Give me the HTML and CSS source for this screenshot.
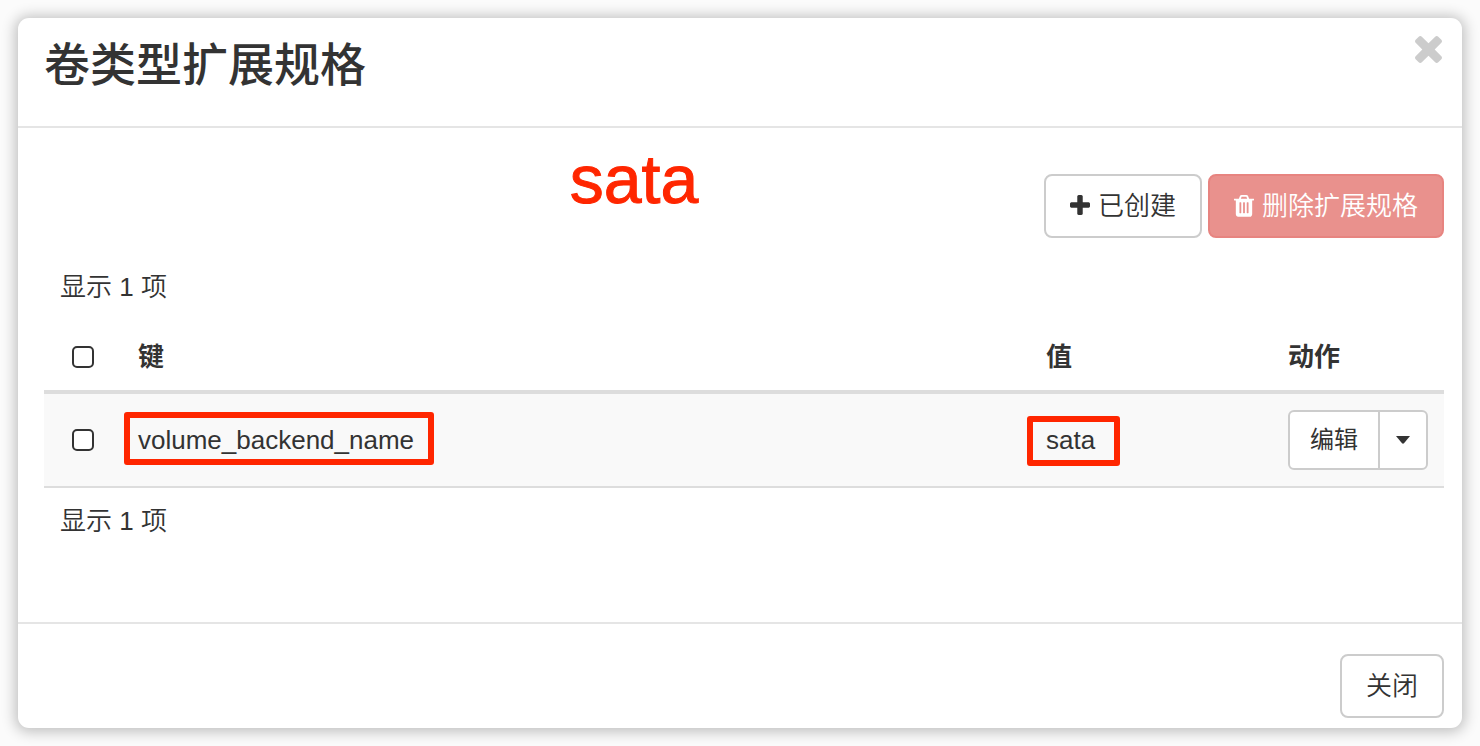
FILE: index.html
```html
<!DOCTYPE html>
<html lang="zh-CN">
<head>
<meta charset="utf-8">
<title>卷类型扩展规格</title>
<link rel="stylesheet" href="styles.css">
</head>
<body>
<div class="modal" role="dialog" aria-labelledby="modal-title">
  <header class="modal-header">
    <h3 class="modal-title" id="modal-title">卷类型扩展规格</h3>
    <button class="close" type="button" aria-label="关闭对话框">
      <svg class="icon-close" viewBox="302 366 1188 1188" aria-hidden="true"><path d="M1490 1322q0 40-28 68l-136 136q-28 28-68 28t-68-28l-294-294-294 294q-28 28-68 28t-68-28l-136-136q-28-28-28-68t28-68l294-294-294-294q-28-28-28-68t28-68l136-136q28-28 68-28t68 28l294 294 294-294q28-28 68-28t68 28l136 136q28 28 28 68t-28 68l-294 294 294 294q28 28 28 68z"/></svg>
    </button>
  </header>

  <main class="modal-body">
    <span class="note">sata</span>
    <div class="toolbar">
      <button class="btn" type="button">
        <svg class="icon" viewBox="192 128 1408 1536" aria-hidden="true"><path d="M1600 736v192q0 40-28 68t-68 28h-416v416q0 40-28 68t-68 28h-192q-40 0-68-28t-28-68v-416h-416q-40 0-68-28t-28-68v-192q0-40 28-68t68-28h416v-416q0-40 28-68t68-28h192q40 0 68 28t28 68v416h416q40 0 68 28t28 68z"/></svg>
        已创建
      </button>
      <button class="btn btn-danger" type="button" disabled>
        <svg class="icon" viewBox="192 128 1408 1536" aria-hidden="true"><path d="M704 1376v-704q0-14-9-23t-23-9h-64q-14 0-23 9t-9 23v704q0 14 9 23t23 9h64q14 0 23-9t9-23zm256 0v-704q0-14-9-23t-23-9h-64q-14 0-23 9t-9 23v704q0 14 9 23t23 9h64q14 0 23-9t9-23zm256 0v-704q0-14-9-23t-23-9h-64q-14 0-23 9t-9 23v704q0 14 9 23t23 9h64q14 0 23-9t9-23zm-544-992h448l-48-117q-7-9-17-11h-317q-10 2-17 11zm928 32v64q0 14-9 23t-23 9h-96v948q0 83-47 143.5t-113 60.5h-832q-66 0-113-58.5t-47-141.5v-952h-96q-14 0-23-9t-9-23v-64q0-14 9-23t23-9h309l70-167q15-37 54-63t79-26h320q40 0 79 26t54 63l70 167h309q14 0 23 9t9 23z"/></svg>
        删除扩展规格
      </button>
    </div>

    <p class="count count-top">显示 1 项</p>
    <table class="specs">
      <thead>
        <tr>
          <th class="col-check"><input class="check" type="checkbox" aria-label="全选"></th>
          <th>键</th>
          <th class="col-value">值</th>
          <th class="col-actions">动作</th>
        </tr>
      </thead>
      <tbody>
        <tr>
          <td class="col-check"><input class="check" type="checkbox" aria-label="选择 volume_backend_name"></td>
          <td><span class="mark mark-key">volume_backend_name</span></td>
          <td class="col-value"><span class="mark mark-value">sata</span></td>
          <td class="col-actions">
            <div class="btn-group">
              <button class="btn btn-small" type="button">编辑</button>
              <button class="btn btn-small btn-caret" type="button" aria-label="更多动作"><svg class="caret" viewBox="0 0 14 8" aria-hidden="true"><path d="M0 0h14L8 7.300q-1 .8-2 0z"/></svg></button>
            </div>
          </td>
        </tr>
      </tbody>
    </table>
    <p class="count">显示 1 项</p>
  </main>

  <footer class="modal-footer">
    <button class="btn" type="button">关闭</button>
  </footer>
</div>
</body>
</html>
```

FILE: styles.css
```css
* {
  box-sizing: border-box;
}

body {
  margin: 0;
  padding: 18px;
  background: #fbfbfb;
  color: #333;
  font: 26px/36px "Liberation Sans", "Noto Sans CJK SC", sans-serif;
}

button {
  font: inherit;
  color: inherit;
}

.modal {
  background: #fff;
  border-radius: 11px;
  box-shadow: 0 1px 14px 3px rgba(0, 0, 0, 0.24);
}

.modal-header {
  display: flex;
  justify-content: space-between;
  align-items: flex-start;
  padding: 18px 20px 32px 26px;
  border-bottom: 2px solid #e5e5e5;
}

.modal-title {
  margin: 0;
  font-size: 46px;
  line-height: 58px;
  font-weight: 500;
}

.close {
  display: flex;
  padding: 0;
  border: 0;
  background: none;
}

.icon-close {
  width: 27px;
  height: 27px;
  fill: #ccc;
}

.modal-body {
  position: relative;
  padding: 46px 18px 83px 26px;
}

.toolbar {
  display: flex;
  justify-content: flex-end;
  gap: 6px;
}

.btn {
  display: flex;
  align-items: center;
  justify-content: center;
  gap: 8px;
  height: 64px;
  padding: 0 24px;
  border: 2px solid #ccc;
  border-radius: 8px;
  background: #fff;
  font-weight: 350;
}

.icon {
  width: 20px;
  fill: currentColor;
}

.btn-danger {
  border-color: #e78480;
  background: #e9918d;
  color: #fff;
}

.note {
  position: absolute;
  top: 11px;
  left: 38%;
  padding-left: 3px;
  color: #ff2600;
  font-size: 68px;
  line-height: 80px;
  -webkit-text-stroke: 1px #ff2600;
}

.count {
  margin: 15px 16px 0;
  font-weight: 350;
}

.count-top {
  margin: 31px 16px 19px;
}

.specs {
  width: 100%;
  border-collapse: separate;
  border-spacing: 0;
  table-layout: fixed;
}

.specs th,
.specs td {
  padding: 16px;
  text-align: left;
  vertical-align: middle;
}

.specs th {
  line-height: 34px;
  border-bottom: 4px solid #ddd;
}

.specs td {
  background: #f9f9f9;
  border-bottom: 2px solid #ddd;
}

.specs .col-check {
  width: 78px;
  padding-left: 28px;
}

.specs .col-value {
  width: 242px;
}

.specs .col-actions {
  width: 172px;
}

.check {
  display: block;
  appearance: none;
  width: 22px;
  height: 22px;
  margin: 0;
  border: 2px solid #333;
  border-radius: 5px;
  background: #fff;
}

.mark {
  position: relative;
}

.mark::after {
  content: "";
  position: absolute;
  border: 6px solid #ff2600;
  border-radius: 3px;
}

.mark-key::after {
  inset: -13px -20px -10px -14px;
}

.mark-value::after {
  inset: -9px -25px -11px -19px;
}

.btn-group {
  display: flex;
}

.btn-small {
  height: 60px;
  padding: 0 20px;
  border-radius: 6px 0 0 6px;
  font-size: 24px;
  font-weight: 400;
}

.btn-caret {
  width: 50px;
  margin-left: -2px;
  padding: 0;
  border-radius: 0 6px 6px 0;
}

.caret {
  width: 14px;
  height: 8px;
  fill: #333;
}

.modal-footer {
  display: flex;
  justify-content: flex-end;
  padding: 30px 18px 10px;
  border-top: 2px solid #e5e5e5;
}
```
